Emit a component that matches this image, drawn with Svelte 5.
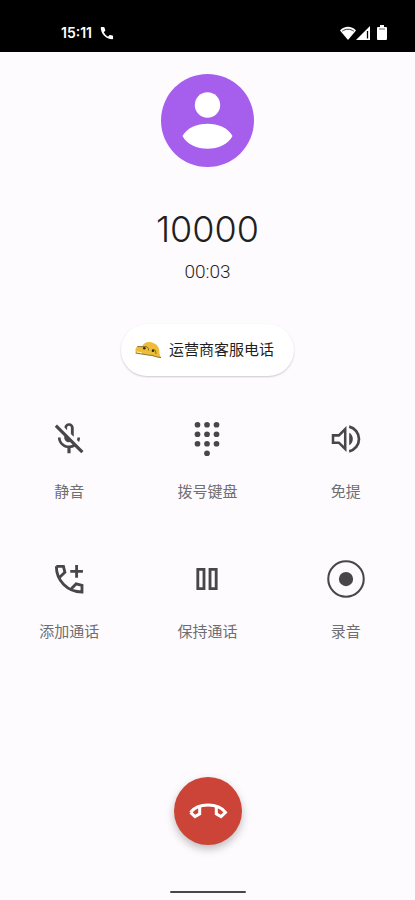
<script>
    let seconds = 3;
    let number = '10000';
    let active = {};

    const actions = [
        {id: 'mute', label: '静音'},
        {id: 'keypad', label: '拨号键盘'},
        {id: 'speaker', label: '免提'},
        {id: 'add', label: '添加通话'},
        {id: 'hold', label: '保持通话'},
        {id: 'record', label: '录音'}
    ];

    const dots = [[6, 3], [12, 3], [18, 3], [6, 9], [12, 9], [18, 9], [6, 15], [12, 15], [18, 15], [12, 21]];

    const pad = (n) => String(n).padStart(2, '0');

    const toggle = (id) => {
        active[id] = !active[id];
    }

    $: duration = `${pad(Math.floor(seconds / 60))}:${pad(seconds % 60)}`;
</script>

<style>
    :global(body) {
        margin: 0;
        background: #fdfbfe;
    }

    .call {
        display: flex;
        flex-direction: column;
        min-height: 100vh;
        font-family: Roboto, "Noto Sans CJK SC", sans-serif;
        color: #1f1f21;
    }

    .status {
        display: flex;
        justify-content: space-between;
        align-items: center;
        height: 52px;
        padding: 13px 28px 0 61px;
        box-sizing: border-box;
        background: #000;
        color: #fff;
    }

    .status-group {
        display: flex;
        align-items: center;
    }

    .time {
        margin-right: 7px;
        font: 600 14px/16px Inter, sans-serif;
    }

    .battery {
        margin-left: 6px;
    }

    svg {
        display: block;
    }

    main {
        display: flex;
        flex: 1;
        flex-direction: column;
        align-items: center;
        padding-top: 22px;
    }

    h1 {
        margin: 40px 0 0;
        font: 300 36px/44px Inter, sans-serif;
    }

    .duration {
        margin: 9px 0 0;
        font-size: 19px;
        font-weight: 300;
        line-height: 24px;
        color: #1f1f21;
    }

    .tag {
        display: flex;
        align-items: center;
        gap: 7px;
        height: 52px;
        margin: 40px 0 0;
        padding: 0 20px 0 13px;
        border-radius: 26px;
        background: #fff;
        box-shadow: 0 1px 2px rgba(0, 0, 0, 0.2);
        font-size: 15px;
        line-height: 20px;
    }

    .actions {
        display: grid;
        grid-template-columns: repeat(3, 1fr);
        row-gap: 58px;
        width: 100%;
        margin-top: 44px;
    }

    button {
        padding: 0;
        border: 0;
        background: none;
        font: inherit;
        cursor: pointer;
    }

    .action {
        display: flex;
        flex-direction: column;
        align-items: center;
        gap: 24px;
        color: #47474a;
    }

    .action span {
        font-size: 15px;
        line-height: 20px;
        color: #6f6f72;
    }

    .hangup {
        display: flex;
        align-items: center;
        justify-content: center;
        width: 68px;
        height: 68px;
        margin-top: auto;
        border-radius: 50%;
        background: #cb4437;
        box-shadow: 0 4px 8px rgba(0, 0, 0, 0.25);
    }

    .home {
        width: 76px;
        height: 2px;
        margin: 46px 0 7px;
        border-radius: 1px;
        background: #47474a;
    }
</style>

<div class="call">
    <header class="status">
        <div class="status-group">
            <span class="time">15:11</span>
            <svg width="16" height="16" viewBox="0 0 24 24" fill="currentColor">
                <path d="M6.5 3H3.6C3 3 2.6 3.5 2.6 4 3 13.5 10.5 21 20 21.4c.6 0 1.1-.4 1.1-1v-3.6c0-.5-.4-.9-.9-1l-3.6-.7c-.4-.1-.8.1-1 .4l-2 2.2A15 15 0 0 1 7.2 10.8l2-2.1c.3-.3.4-.7.3-1L8.3 4C8.2 3.4 7.5 3 6.5 3z"/>
            </svg>
        </div>
        <div class="status-group">
            <svg width="16" height="16" viewBox="0 0 16 16">
                <path d="M8 15L0 5.5C4.5.5 11.5.5 16 5.5z" fill="#fff"/>
                <path d="M2.2 6.2C6 3.6 10 3.6 13.8 6.2" fill="none" stroke="#000" stroke-width=".8"/>
            </svg>
            <svg width="15" height="16" viewBox="0 0 15 16">
                <path d="M14 1v14H0z" fill="#fff"/>
                <path d="M11.5 6v7.5" stroke="#000" stroke-width="1.3"/>
            </svg>
            <svg class="battery" width="10" height="16" viewBox="0 0 10 16" fill="#fff">
                <path d="M3 0h4v2h2q1 0 1 1v11q0 1-1 1H1q-1 0-1-1V3q0-1 1-1h2z"/>
                <path d="M2 4h6" stroke="#000" stroke-width=".6"/>
            </svg>
        </div>
    </header>

    <main>
        <svg width="93" height="93" viewBox="0 0 93 93">
            <circle cx="46.5" cy="46.5" r="46.5" fill="#a65fec"/>
            <circle cx="46.5" cy="31" r="12.7" fill="#fff"/>
            <path d="M21.5 62C30 45.5 63 45.5 71.5 62C63 79 30 79 21.5 62z" fill="#fff"/>
        </svg>

        <h1>{number}</h1>
        <p class="duration">{duration}</p>

        <p class="tag">
            <svg width="28" height="20" viewBox="0 0 28 20">
                <path d="M8 7C9 3 13 1.5 17 2.2C22 3 25.5 7 25.4 11.5C25.4 14 26 15.5 27 17.5C22 17.6 19 15 15 15L2 13C.8 10 1.5 7.5 3.5 6.5z" fill="#edbd3a"/>
                <path d="M1.5 13L15 15.2C19 15 22 17.4 27 17.6M3.5 6.5L13 6.8Q15 8 14.5 10.5M18 10Q20 9 21.5 10.5L22 14" fill="none" stroke="#7c6426" stroke-width=".9"/>
                <circle cx="10.3" cy="8.3" r="1.3" fill="#302918"/>
                <circle cx="19" cy="10.8" r="1.3" fill="#302918"/>
                <path d="M3 12l5 .9" stroke="#fff0b2" stroke-width="1"/>
            </svg>
            <span>运营商客服电话</span>
        </p>

        <div class="actions">
            {#each actions as action}
                <button class="action" type="button" aria-pressed={!!active[action.id]} on:click={() => toggle(action.id)}>
                    <svg width="38" height="38" viewBox="0 0 24 24" fill="currentColor">
                        {#if action.id === 'mute'}
                            <path d="M10.8 4.9c0-.66.54-1.2 1.2-1.2s1.2.54 1.2 1.2l-.01 3.91L15 10.6V5c0-1.66-1.34-3-3-3-1.54 0-2.79 1.16-2.96 2.65l1.76 1.76V4.9zM19 11h-1.7c0 .58-.1 1.13-.27 1.64l1.27 1.27c.44-.88.7-1.87.7-2.91zM4.41 2.86L3 4.27l6 6V11c0 1.66 1.34 3 3 3 .23 0 .44-.03.65-.08l1.66 1.66c-.71.33-1.5.52-2.31.52-2.76 0-5.3-2.1-5.3-5.1H5c0 3.41 2.72 6.23 6 6.72V21h2v-3.28c.91-.13 1.77-.45 2.55-.9l4.2 4.2 1.41-1.41L4.41 2.86z"/>
                        {:else if action.id === 'keypad'}
                            {#each dots as [x, y]}
                                <circle cx={x} cy={y} r="1.8"/>
                            {/each}
                        {:else if action.id === 'speaker'}
                            <path d="M3.8 9.7h3.7l4-4v12.6l-4-4H3.8z" fill="none" stroke="currentColor" stroke-width="1.6"/>
                            <path d="M14 8v8c1.4-.7 2.3-2.2 2.3-4S15.400 8.700 14 8z"/>
                            <path d="M14 4.200C17.600 5.100 20.200 8.200 20.200 12S17.600 18.900 14 19.800" fill="none" stroke="currentColor" stroke-width="1.7"/>
                        {:else if action.id === 'add'}
                            <path d="M4 4h4.500l.9 3.800-3.300 3.100M13.600 18l2.900-2.900 3.700.9v4.200C11 20.200 4 13 4 4M16.800 3.200v8M12.800 7.200h8" fill="none" stroke="currentColor" stroke-width="1.800"/>
                        {:else if action.id === 'hold'}
                            <path d="M6.200 5.900h3.900v12.200H6.200zM13.900 5.900h3.900v12.200h-3.900z" fill="none" stroke="currentColor" stroke-width="1.800"/>
                        {:else}
                            <circle cx="12" cy="12" r="11.200" fill="none" stroke="currentColor" stroke-width="1.300"/>
                            <circle cx="12" cy="12" r="4.500"/>
                        {/if}
                    </svg>
                    <span>{action.label}</span>
                </button>
            {/each}
        </div>

        <button class="hangup" type="button" aria-label="挂断">
            <svg width="40" height="24" viewBox="0 0 40 24" fill="none" stroke="#fff" stroke-width="3">
                <path d="M2.500 13.300C10 3.500 30 3.500 37.500 13.300L33 17.600L28.300 14.800V8.500M11.700 8.500V14.800L7 17.600L2.500 13.300"/>
            </svg>
        </button>
        <div class="home"></div>
    </main>
</div>
